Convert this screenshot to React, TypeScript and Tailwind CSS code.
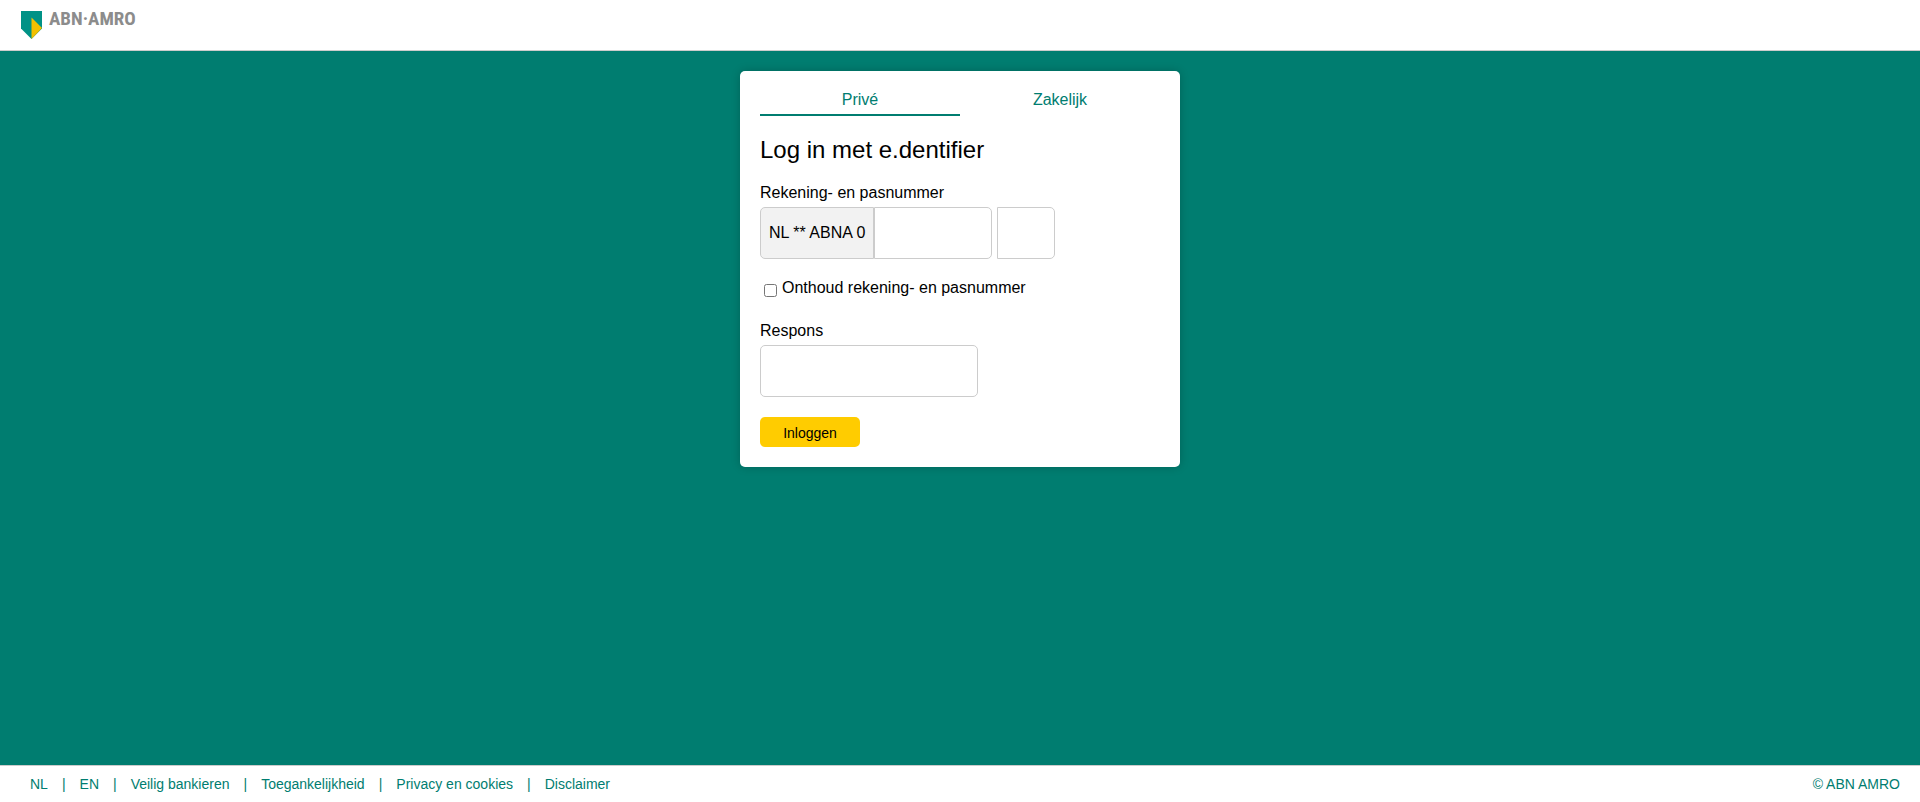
import React from "react";

const footerLinks = ["NL", "EN", "Veilig bankieren", "Toegankelijkheid", "Privacy en cookies", "Disclaimer"];

function Header() {
  return (
    <header className="flex h-[51px] items-start border-b border-[#cccccc] bg-white px-5 pt-[10px]">
      <a href="#" className="flex items-start gap-[7px]">
        <svg width="22" height="30" viewBox="0 0 22 30" aria-hidden="true">
          <path d="M1 1H22V18.5L11.5 29L1 18.5Z" fill="#009286" />
          <path d="M11.5 7.5L22 18L11.5 29Z" fill="#f3c000" />
        </svg>
        <span className="font-['Roboto_Condensed','Roboto',sans-serif] text-[19px] font-bold leading-[18px] text-[#8c8c8c]">
          ABN·AMRO
        </span>
      </a>
    </header>
  );
}

function Tabs() {
  return (
    <div role="tablist" className="grid grid-cols-2 text-[#007d70]">
      <button type="button" role="tab" aria-selected="true" className="border-b-2 border-[#007d70] pb-0.5 leading-6">
        Privé
      </button>
      <button type="button" role="tab" aria-selected="false" className="border-b-2 border-transparent pb-0.5 leading-6">
        Zakelijk
      </button>
    </div>
  );
}

function LoginCard() {
  return (
    <section className="w-full max-w-[440px] rounded-[5px] bg-white px-5 pb-5 pt-[17px] shadow-[0_0_10px_rgba(0,0,0,0.2)]">
      <Tabs />
      <form onSubmit={(e) => e.preventDefault()}>
        <h1 className="my-4 text-2xl leading-[35px]">Log in met e.dentifier</h1>
        <label htmlFor="account" className="block leading-5">
          Rekening- en pasnummer
        </label>
        <div className="mt-1 flex h-[52px]">
          <span className="flex items-center rounded-l-[5px] border border-[#cccccc] bg-[#f2f2f2] px-2">
            NL ** ABNA 0
          </span>
          <input
            id="account"
            type="text"
            className="w-[118px] rounded-r-[5px] border border-[#cccccc] px-2 outline-none"
          />
          <input
            type="text"
            aria-label="Pasnummer"
            className="ml-[5px] w-[58px] rounded-r-[5px] border border-[#cccccc] px-2 outline-none"
          />
        </div>
        <div className="ml-1 mt-4 flex items-end gap-[5px]">
          <input id="remember" type="checkbox" className="mb-1 size-[13px]" />
          <label htmlFor="remember" className="leading-[26px]">
            Onthoud rekening- en pasnummer
          </label>
        </div>
        <label htmlFor="response" className="mt-5 block leading-5">
          Respons
        </label>
        <input
          id="response"
          type="text"
          className="mt-1 block h-[52px] w-[218px] rounded-[5px] border border-[#cccccc] px-2 outline-none"
        />
        <button type="submit" className="mt-5 block h-[30px] w-[100px] rounded-[5px] bg-[#ffcc00] pt-0.5 text-sm">
          Inloggen
        </button>
      </form>
    </section>
  );
}

function Footer() {
  return (
    <footer className="flex justify-between border-t border-[#cccccc] bg-white py-2 pl-[30px] pr-5 text-sm text-[#007d70]">
      <nav className="flex gap-[14px]">
        {footerLinks.map((label, i) => (
          <React.Fragment key={label}>
            {i > 0 && <span aria-hidden="true">|</span>}
            <a href="#">{label}</a>
          </React.Fragment>
        ))}
      </nav>
      <span>© ABN AMRO</span>
    </footer>
  );
}

export default function App() {
  return (
    <div className="flex min-h-screen flex-col bg-[#007d70] font-['Liberation_Sans',Arial,sans-serif] text-base text-black">
      <Header />
      <main className="flex flex-1 items-start justify-center py-5">
        <LoginCard />
      </main>
      <Footer />
    </div>
  );
}
